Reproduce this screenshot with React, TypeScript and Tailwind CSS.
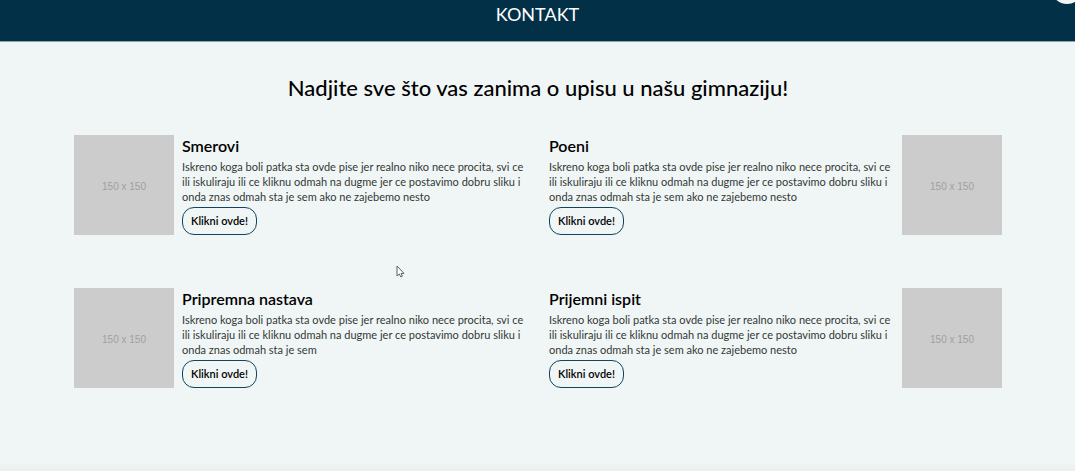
type CardProps = {
  title: string;
  text: string;
  imageRight?: boolean;
};

const cards: CardProps[] = [
  {
    title: 'Smerovi',
    text: 'Iskreno koga boli patka sta ovde pise jer realno niko nece procita, svi ce ili iskuliraju ili ce kliknu odmah na dugme jer ce postavimo dobru sliku i onda znas odmah sta je sem ako ne zajebemo nesto',
  },
  {
    title: 'Poeni',
    text: 'Iskreno koga boli patka sta ovde pise jer realno niko nece procita, svi ce ili iskuliraju ili ce kliknu odmah na dugme jer ce postavimo dobru sliku i onda znas odmah sta je sem ako ne zajebemo nesto',
    imageRight: true,
  },
  {
    title: 'Pripremna nastava',
    text: 'Iskreno koga boli patka sta ovde pise jer realno niko nece procita, svi ce ili iskuliraju ili ce kliknu odmah na dugme jer ce postavimo dobru sliku i onda znas odmah sta je sem',
  },
  {
    title: 'Prijemni ispit',
    text: 'Iskreno koga boli patka sta ovde pise jer realno niko nece procita, svi ce ili iskuliraju ili ce kliknu odmah na dugme jer ce postavimo dobru sliku i onda znas odmah sta je sem ako ne zajebemo nesto',
    imageRight: true,
  },
];

function Card({ title, text, imageRight }: CardProps) {
  return (
    <article className={imageRight ? 'flex flex-row-reverse gap-2' : 'flex gap-2'}>
      <div className="flex size-[100px] shrink-0 items-center justify-center bg-[#cccccc] pt-0.5 font-['Liberation_Sans',sans-serif] text-[10px] text-[#a0a0a0]">
        150 x 150
      </div>
      <div className="flex min-w-0 flex-1 flex-col items-start">
        <h2 className="text-base leading-[22px] font-semibold text-black">{title}</h2>
        <p className="mt-0.5 text-[11px] leading-[15px] text-[#333837]">{text}</p>
        <button
          type="button"
          className="mt-[3px] h-7 rounded-xl border border-[#124460] px-2 text-[11px] leading-4 font-semibold text-black"
        >
          Klikni ovde!
        </button>
      </div>
    </article>
  );
}

export default function App() {
  return (
    <div className="relative flex min-h-screen flex-col overflow-hidden bg-[#f0f6f5] font-['Lato','Noto_Sans',sans-serif]">
      <header className="flex justify-center border-b border-[#8ba5b0] bg-[#023047] pt-0.5 pb-[15px]">
        <a href="#kontakt" className="text-lg leading-6 text-white">
          KONTAKT
        </a>
      </header>
      <div className="absolute -top-7 -right-2 size-8 rounded-full bg-[#f0f6f5]" />
      <main className="flex-1 pt-[30px] pr-[73px] pl-[74px]">
        <h1 className="text-center text-[22px] leading-8 font-medium text-black">
          Nadjite sve što vas zanima o upisu u našu gimnaziju!
        </h1>
        <div className="mt-[31px] grid grid-cols-2 gap-x-[22px] gap-y-[53px]">
          {cards.map((card) => (
            <Card key={card.title} {...card} />
          ))}
        </div>
      </main>
      <div className="h-2 bg-linear-to-b from-[#f0f6f5] to-[#ebefee]" />
      <svg
        className="absolute top-[265px] left-[396px] h-3.5 w-2.5"
        viewBox="0 0 10 14"
        fill="white"
        stroke="#5c6163"
        aria-hidden="true"
      >
        <path d="M1 1v10l2.3-2 1.6 3 1.5-.8L5 8.4h3z" />
      </svg>
    </div>
  );
}
